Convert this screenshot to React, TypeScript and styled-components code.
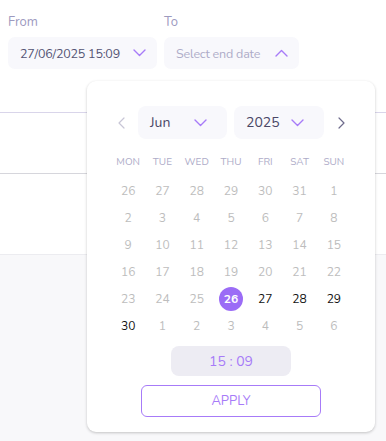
import * as React from "react"
import styled, { createGlobalStyle } from "styled-components"

const GlobalStyle = createGlobalStyle`
  body {
    margin: 0;
    font-family: "Nunito", Lato, "Noto Sans", sans-serif;
    background: #f8f8fa;
  }
`

const weekdays = ["MON", "TUE", "WED", "THU", "FRI", "SAT", "SUN"]

type Day = { n: number; current: boolean; selected?: boolean }

const buildDays = (): Day[] => {
  const days: Day[] = []
  for (let n = 26; n <= 31; n++) days.push({ n, current: false })
  for (let n = 1; n <= 30; n++) days.push({ n, current: n >= 26, selected: n === 26 })
  for (let n = 1; n <= 6; n++) days.push({ n, current: false })
  return days
}

const Chevron = ({ up, color = "#a77bf8" }: { up?: boolean; color?: string }) => (
  <svg width="13" height="8" viewBox="0 0 13 8" fill="none">
    <polyline
      points={up ? "1,7 6.5,1.5 12,7" : "1,1 6.5,6.5 12,1"}
      stroke={color}
      strokeWidth="1.4"
      strokeLinecap="round"
      strokeLinejoin="round"
    />
  </svg>
)

const Arrow = ({ right, color }: { right?: boolean; color: string }) => (
  <svg width="7" height="12" viewBox="0 0 7 12" fill="none">
    <polyline
      points={right ? "1,1 6,6 1,11" : "6,1 1,6 6,11"}
      stroke={color}
      strokeWidth="1.2"
      strokeLinecap="round"
      strokeLinejoin="round"
    />
  </svg>
)

const App = () => (
  <Page>
    <GlobalStyle />
    <Top>
      <Fields>
        <Field>
          <Label>From</Label>
          <Input $width={149}>
            <Value>27/06/2025 15:09</Value>
            <Chevron />
          </Input>
        </Field>
        <Field>
          <Label>To</Label>
          <Input $width={135}>
            <Value $placeholder>Select end date</Value>
            <Chevron up />
          </Input>
        </Field>
      </Fields>
      <Table>
        <Row $color="#d9d5ea" />
        <Row $color="#d6d6dc" />
      </Table>
    </Top>

    <Popup>
      <Nav>
        <NavButton>
          <Arrow color="#c8c6d6" />
        </NavButton>
        <Select $width={89}>
          <span>Jun</span>
          <Chevron />
        </Select>
        <Select $width={90}>
          <span>2025</span>
          <Chevron />
        </Select>
        <NavButton>
          <Arrow right color="#6e6b8c" />
        </NavButton>
      </Nav>
      <Weekdays>
        {weekdays.map((w) => (
          <Weekday key={w}>{w}</Weekday>
        ))}
      </Weekdays>
      <Days>
        {buildDays().map((d, i) => (
          <DayCell key={i}>
            <DayNum $current={d.current} $selected={d.selected}>
              {d.n}
            </DayNum>
          </DayCell>
        ))}
      </Days>
      <TimeBox>15 : 09</TimeBox>
      <ApplyButton>APPLY</ApplyButton>
    </Popup>
  </Page>
)

export default App

// Styles
const Page = styled.div`
  position: relative;
  width: 386px;
  height: 441px;
  overflow: hidden;
`

const Top = styled.div`
  background: #ffffff;
  height: 255px;
  padding: 13px 0 0;
  box-sizing: border-box;
  border-bottom: 1px solid #ececf0;
`

const Fields = styled.div`
  display: flex;
  gap: 7px;
  padding: 0 8px;
`

const Field = styled.div`
  display: flex;
  flex-direction: column;
  gap: 6px;
`

const Label = styled.div`
  font-size: 13px;
  line-height: 18px;
  color: #9d9abf;
`

const Input = styled.div<{ $width: number }>`
  width: ${(p) => p.$width}px;
  height: 32px;
  box-sizing: border-box;
  padding: 0 11px 0 12px;
  border-radius: 7px;
  background: #f8f8fc;
  display: flex;
  align-items: center;
  justify-content: space-between;
`

const Value = styled.span<{ $placeholder?: boolean }>`
  font-size: 12.5px;
  letter-spacing: -0.2px;
  white-space: nowrap;
  color: ${(p) => (p.$placeholder ? "#aeacc8" : "#545474")};
`

const Table = styled.div`
  margin-top: 43px;
`

const Row = styled.div<{ $color: string }>`
  height: 60px;
  border-top: 1px solid ${(p) => p.$color};
`

const Popup = styled.div`
  position: absolute;
  left: 87px;
  top: 81px;
  width: 288px;
  height: 351px;
  box-sizing: border-box;
  padding: 25px 24px 15px;
  background: #ffffff;
  border-radius: 9px;
  box-shadow: 0 1px 3px rgba(0, 0, 0, 0.22);
  display: flex;
  flex-direction: column;
  align-items: center;
`

const Nav = styled.div`
  width: 240px;
  display: flex;
  align-items: center;
  gap: 7px;
`

const NavButton = styled.div`
  width: 20px;
  height: 33px;
  display: flex;
  align-items: center;
  justify-content: center;
`

const Select = styled.div<{ $width: number }>`
  width: ${(p) => p.$width}px;
  height: 33px;
  box-sizing: border-box;
  padding: 0 20px 0 12px;
  border-radius: 8px;
  background: #f8f8fc;
  display: flex;
  align-items: center;
  justify-content: space-between;
  font-size: 14px;
  color: #4a4766;
`

const Weekdays = styled.div`
  width: 240px;
  margin-top: 13px;
  display: grid;
  grid-template-columns: repeat(7, 1fr);
  height: 20px;
  align-items: center;
`

const Weekday = styled.div`
  text-align: center;
  font-size: 10px;
  color: #aeabc8;
`

const Days = styled.div`
  width: 240px;
  margin-top: 5px;
  display: grid;
  grid-template-columns: repeat(7, 1fr);
  grid-auto-rows: 27px;
`

const DayCell = styled.div`
  display: flex;
  align-items: center;
  justify-content: center;
`

const DayNum = styled.div<{ $current: boolean; $selected?: boolean }>`
  width: 24px;
  height: 24px;
  border-radius: 50%;
  display: flex;
  align-items: center;
  justify-content: center;
  font-size: 12px;
  font-weight: ${(p) => (p.$selected ? 700 : 400)};
  background: ${(p) => (p.$selected ? "#9b6cf6" : "transparent")};
  color: ${(p) => (p.$selected ? "#ffffff" : p.$current ? "#111111" : "#bdbdbd")};
`

const TimeBox = styled.div`
  margin-top: 7px;
  width: 120px;
  height: 30px;
  border-radius: 8px;
  background: #edecf3;
  display: flex;
  align-items: center;
  justify-content: center;
  font-size: 14px;
  color: #a77bf8;
`

const ApplyButton = styled.button`
  margin-top: 9px;
  width: 180px;
  height: 32px;
  border: 1.5px solid #a77bf8;
  border-radius: 6px;
  background: #ffffff;
  font-family: inherit;
  font-size: 13px;
  color: #a77bf8;
  cursor: pointer;
`
